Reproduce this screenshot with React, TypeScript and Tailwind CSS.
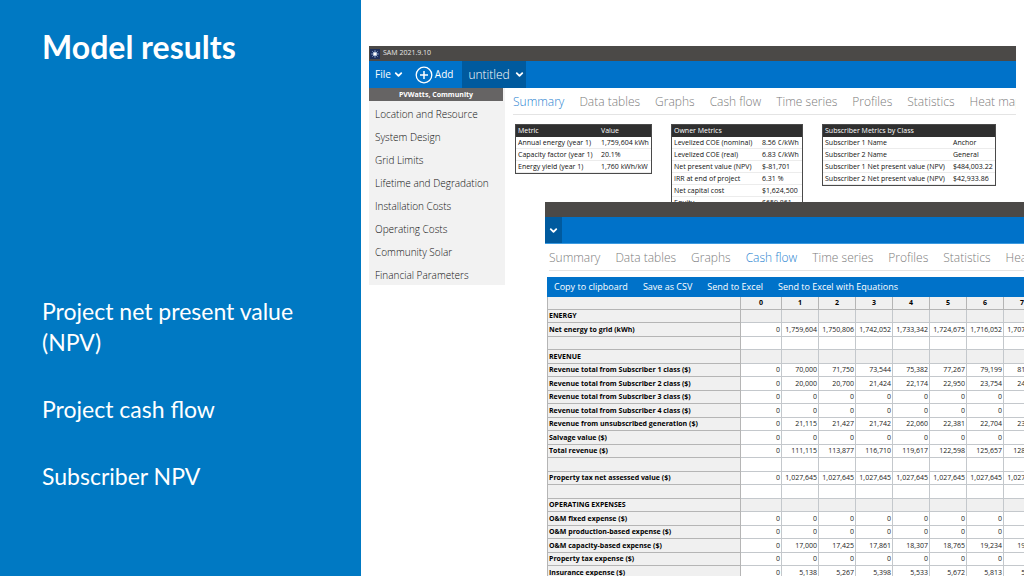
import { ChevronDown } from "lucide-react";

const TABS = [
  "Summary",
  "Data tables",
  "Graphs",
  "Cash flow",
  "Time series",
  "Profiles",
  "Statistics",
  "Heat map",
];

const SIDEBAR = [
  "Location and Resource",
  "System Design",
  "Grid Limits",
  "Lifetime and Degradation",
  "Installation Costs",
  "Operating Costs",
  "Community Solar",
  "Financial Parameters",
];

const ACTIONS = [
  "Copy to clipboard",
  "Save as CSV",
  "Send to Excel",
  "Send to Excel with Equations",
];

const YEARS = ["0", "1", "2", "3", "4", "5", "6", "7"];

const ZEROS = ["0", "0", "0", "0", "0", "0", "0", "0"];

type Row = { label: string; section?: boolean; values?: string[] };

const ROWS: Row[] = [
  { label: "ENERGY", section: true },
  {
    label: "Net energy to grid (kWh)",
    values: ["0", "1,759,604", "1,750,806", "1,742,052", "1,733,342", "1,724,675", "1,716,052", "1,707,472"],
  },
  { label: "" },
  { label: "REVENUE", section: true },
  {
    label: "Revenue total from Subscriber 1 class ($)",
    values: ["0", "70,000", "71,750", "73,544", "75,382", "77,267", "79,199", "81,179"],
  },
  {
    label: "Revenue total from Subscriber 2 class ($)",
    values: ["0", "20,000", "20,700", "21,424", "22,174", "22,950", "23,754", "24,585"],
  },
  { label: "Revenue total from Subscriber 3 class ($)", values: ZEROS },
  { label: "Revenue total from Subscriber 4 class ($)", values: ZEROS },
  {
    label: "Revenue from unsubscribed generation ($)",
    values: ["0", "21,115", "21,427", "21,742", "22,060", "22,381", "22,704", "23,030"],
  },
  { label: "Salvage value ($)", values: ZEROS },
  {
    label: "Total revenue ($)",
    values: ["0", "111,115", "113,877", "116,710", "119,617", "122,598", "125,657", "128,794"],
  },
  { label: "" },
  {
    label: "Property tax net assessed value ($)",
    values: ["0", "1,027,645", "1,027,645", "1,027,645", "1,027,645", "1,027,645", "1,027,645", "1,027,645"],
  },
  { label: "" },
  { label: "OPERATING EXPENSES", section: true },
  { label: "O&M fixed expense ($)", values: ZEROS },
  { label: "O&M production-based expense ($)", values: ZEROS },
  {
    label: "O&M capacity-based expense ($)",
    values: ["0", "17,000", "17,425", "17,861", "18,307", "18,765", "19,234", "19,715"],
  },
  { label: "Property tax expense ($)", values: ZEROS },
  {
    label: "Insurance expense ($)",
    values: ["0", "5,138", "5,267", "5,398", "5,533", "5,672", "5,813", "5,959"],
  },
];

function TabStrip({ active }: { active: string }) {
  return (
    <nav className="flex h-[27px] gap-[15px] overflow-hidden border-b border-[#e4e4e4] whitespace-nowrap">
      {TABS.map((tab) => (
        <button
          key={tab}
          className={`shrink-0 pt-px text-[12px] leading-[26px] font-light ${
            tab === active ? "text-[#1f7fd0]" : "text-[#7c7c7c]"
          }`}
        >
          {tab}
        </button>
      ))}
    </nav>
  );
}

function MetricTable({
  head,
  rows,
  labelWidth,
  width,
}: {
  head: [string, string];
  rows: [string, string][];
  labelWidth: string;
  width: string;
}) {
  return (
    <table
      className={`${width} shrink-0 table-fixed border-separate border-spacing-0 border border-[#4a4a4a] bg-white text-left text-[7px] whitespace-nowrap text-[#111]`}
    >
      <thead className="bg-[#2f2f2f] leading-[12px] text-white">
        <tr>
          <th className={`${labelWidth} p-0 pl-[2px] font-normal`}>{head[0]}</th>
          <th className="p-0 font-normal">{head[1]}</th>
        </tr>
      </thead>
      <tbody className="leading-[11px]">
        {rows.map(([label, value]) => (
          <tr key={label}>
            <td className="border-b border-[#ececec] p-0 pl-[2px]">{label}</td>
            <td className="border-b border-[#ececec] p-0">{value}</td>
          </tr>
        ))}
      </tbody>
    </table>
  );
}

function SummaryWindow() {
  return (
    <section className="mt-[46px] mr-2 ml-2 min-w-0 flex-1">
      {/* Title bar */}
      <div className="flex h-[15px] items-center gap-[3px] bg-[#4b4947] pl-px text-[7px] text-[#e8e8e8]">
        <svg viewBox="0 0 10 10" className="size-[10px]">
          <rect width="10" height="10" fill="#1d2f5c" />
          <path
            d="M5 1.2v7.6M1.2 5h7.6M2.3 2.3l5.4 5.4M7.7 2.3L2.3 7.7"
            stroke="#9dbdea"
            strokeWidth="0.8"
          />
          <circle cx="5" cy="5" r="1.8" fill="#fff" />
        </svg>
        SAM 2021.9.10
      </div>

      {/* Main menu */}
      <div className="flex h-[27px] items-stretch bg-[#0072c9] text-white">
        <button className="flex items-center gap-[2px] pl-[6px] text-[10px]">
          File
          <ChevronDown className="size-[11px]" strokeWidth={4} />
        </button>
        <button className="flex items-center gap-[2px] pr-[9px] pl-[11px] text-[10px]">
          <svg viewBox="0 0 18 18" className="size-[18px]" fill="none" stroke="#fff">
            <circle cx="9" cy="9" r="7.8" strokeWidth="1.3" />
            <path d="M9 5v8M5 9h8" strokeWidth="1.5" />
          </svg>
          Add
        </button>
        <button className="flex w-[64px] items-center gap-1 bg-[#005a9e] pl-[6px] text-[12px] font-light">
          untitled
          <ChevronDown className="size-[11px] shrink-0" strokeWidth={4} />
        </button>
      </div>

      <div className="flex items-start">
        {/* Input pages */}
        <aside className="w-[136px] shrink-0 bg-[#f2f2f2]">
          <div className="mr-[2px] h-[13px] bg-[#666464] text-center text-[7px] leading-[13px] font-bold text-white">
            PVWatts, Community
          </div>
          <ul className="flex flex-col gap-1 pt-1">
            {SIDEBAR.map((item) => (
              <li key={item}>
                <a
                  href="#"
                  className="block pl-[6px] text-[10px] leading-[19px] font-light text-[#111]"
                >
                  {item}
                </a>
              </li>
            ))}
          </ul>
        </aside>

        <div className="min-w-0 flex-1">
          <div className="pl-2">
            <TabStrip active="Summary" />
          </div>
          <div className="flex items-start gap-[19px] pt-[9px] pl-[10px]">
            <MetricTable
              width="w-[137px]"
              labelWidth="w-[85px]"
              head={["Metric", "Value"]}
              rows={[
                ["Annual energy (year 1)", "1,759,604 kWh"],
                ["Capacity factor (year 1)", "20.1%"],
                ["Energy yield (year 1)", "1,760 kWh/kW"],
              ]}
            />
            <MetricTable
              width="w-[132px]"
              labelWidth="w-[90px]"
              head={["Owner Metrics", ""]}
              rows={[
                ["Levelized COE (nominal)", "8.56 ¢/kWh"],
                ["Levelized COE (real)", "6.83 ¢/kWh"],
                ["Net present value (NPV)", "$-81,701"],
                ["IRR at end of project", "6.31 %"],
                ["Net capital cost", "$1,624,500"],
                ["Equity", "$659,861"],
              ]}
            />
            <MetricTable
              width="w-[174px]"
              labelWidth="w-[130px]"
              head={["Subscriber Metrics by Class", ""]}
              rows={[
                ["Subscriber 1 Name", "Anchor"],
                ["Subscriber 2 Name", "General"],
                ["Subscriber 1 Net present value (NPV)", "$484,003.22"],
                ["Subscriber 2 Net present value (NPV)", "$42,933.86"],
              ]}
            />
          </div>
        </div>
      </div>
    </section>
  );
}

function CashFlowWindow() {
  return (
    <section className="absolute top-[202px] right-0 left-[184px] overflow-hidden bg-white">
      <div className="h-[15px] bg-[#4b4947]" />
      <div className="flex h-[27px] border-b border-[#3b9ae0] bg-[#0072c9]">
        <button
          aria-label="Case menu"
          className="flex w-[17px] items-center justify-center bg-[#005a9e] text-white"
        >
          <ChevronDown className="size-[11px]" strokeWidth={4} />
        </button>
      </div>
      <div className="pl-1">
        <TabStrip active="Cash flow" />
      </div>

      <div className="pt-[6px] pl-[2px]">
        <div className="flex h-5 items-center gap-[15px] bg-[#0072c9] pl-[7px] text-[9px] whitespace-nowrap text-white">
          {ACTIONS.map((action) => (
            <button key={action}>{action}</button>
          ))}
        </div>

        <table className="w-[494px] table-fixed border-separate border-spacing-0 border-l border-[#b5b5b5] text-[7px] leading-[12px] whitespace-nowrap text-[#222]">
          <thead className="bg-[#f0f0f0]">
            <tr className="h-[13px]">
              <th className="w-[193px] border-r border-b border-[#b5b5b5] p-0" />
              {YEARS.map((year) => (
                <th
                  key={year}
                  className={`border-r border-b border-[#b5b5b5] p-0 font-bold text-black ${
                    year === "0" ? "w-[41px]" : "w-[37px]"
                  }`}
                >
                  {year}
                </th>
              ))}
            </tr>
          </thead>
          <tbody>
            {ROWS.map((row, i) => (
              <tr key={i} className="odd:h-[13px] even:h-[14px]">
                <th className="border-r border-b border-[#b5b5b5] bg-[#f0f0f0] p-0 pl-px text-left font-bold text-black">
                  {row.label}
                </th>
                {YEARS.map((year, col) => (
                  <td
                    key={year}
                    className={`border-r border-b border-[#c4c8cc] p-0 pr-px text-right ${
                      row.section ? "bg-[#f0f0f0]" : "bg-white"
                    }`}
                  >
                    {row.values?.[col]}
                  </td>
                ))}
              </tr>
            ))}
          </tbody>
        </table>
      </div>
    </section>
  );
}

export default function App() {
  return (
    <main className="flex h-screen overflow-hidden bg-white font-['Open_Sans',sans-serif]">
      <div className="w-[361px] shrink-0 bg-[#0079c3] px-[42px] pt-[27px] font-['Lato',sans-serif] text-white">
        <h1 className="text-[32px] leading-10 font-bold">Model results</h1>
        <div className="mt-[229px] flex flex-col gap-9 text-[23px] leading-[31px]">
          <p>Project net present value (NPV)</p>
          <p>Project cash flow</p>
          <p>Subscriber NPV</p>
        </div>
      </div>

      <div className="relative flex min-w-0 flex-1 items-start overflow-hidden">
        <SummaryWindow />
        <CashFlowWindow />
      </div>
    </main>
  );
}
